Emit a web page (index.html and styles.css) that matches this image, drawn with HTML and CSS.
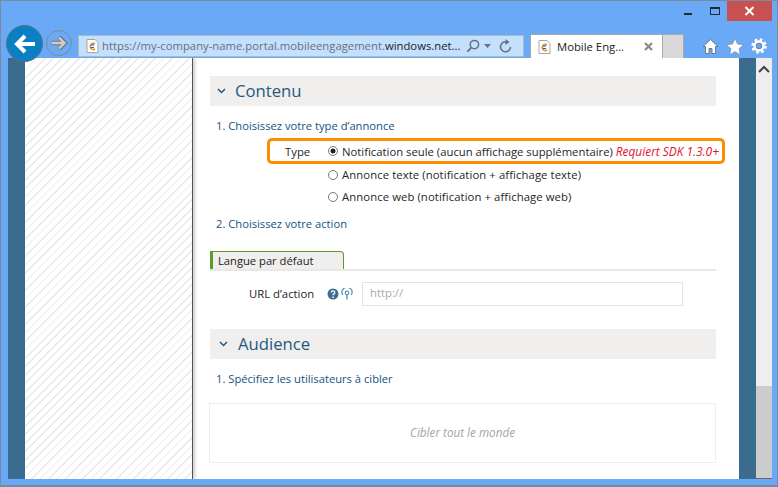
FILE: index.html
```html
<!DOCTYPE html>
<html lang="fr">
<head>
    <meta charset="UTF-8">
    <title>Mobile Engagement</title>
    <link rel="stylesheet" href="styles.css">
</head>
<body>
    <div class="window">
        <div class="titlebar">
            <span class="win-min"></span>
            <span class="win-max"></span>
            <span class="win-close">
                <svg width="11" height="10" viewBox="0 0 11 10"><path d="M1.5 1l8 8M9.5 1l-8 8" stroke="#fff" stroke-width="2"/></svg>
            </span>
        </div>
        <div class="toolbar">
            <span class="back">
                <svg width="26" height="26" viewBox="0 0 26 26"><path d="M23 13H6M13 5l-8 8 8 8" fill="none" stroke="#fff" stroke-width="4"/></svg>
            </span>
            <span class="forward">
                <svg width="18" height="16" viewBox="0 0 18 16"><path d="M1 8h13M9 2l6 6-6 6" fill="none" stroke="#77777a" stroke-width="4.400"/><path d="M1.500 8h12.500M9 2.500l5.500 5.500L9 13.500" fill="none" stroke="#cfcfca" stroke-width="2.400"/></svg>
            </span>
            <div class="address">
                <svg class="favicon" width="13" height="14" viewBox="0 0 13 14"><path d="M1 .5h8l3 3v10H1z" fill="#fff" stroke="#a5a5a5"/><path d="M9 5a3 3 0 1 0 0 5" fill="none" stroke="#e8912c" stroke-width="1.6"/><path d="M5 6h3M5 8.500h3" stroke="#1d5fa8"/></svg>
                <span class="url">https://my-company-name.portal.mobileengagement.<b>windows.net...</b></span>
                <svg class="addr-icon" width="14" height="14" viewBox="0 0 15 15"><circle cx="9" cy="6" r="4.500" fill="none" stroke="#6b7078" stroke-width="1.600"/><path d="M5.500 9.500L1.500 13.500" stroke="#6b7078" stroke-width="2"/></svg>
                <svg class="addr-caret" width="7" height="4" viewBox="0 0 7 4"><path d="M0 0h7L3.500 4z" fill="#6b7078"/></svg>
                <svg class="addr-icon" width="13" height="14" viewBox="0 0 13 14"><path d="M8.500 3.200A5 5 0 1 0 11.500 8" fill="none" stroke="#6b7078" stroke-width="1.600"/><path d="M6.500 0v6l4-3z" fill="#6b7078"/></svg>
            </div>
            <div class="tab">
                <svg class="favicon" width="13" height="14" viewBox="0 0 13 14"><path d="M1 .5h8l3 3v10H1z" fill="#fff" stroke="#a5a5a5"/><path d="M9 5a3 3 0 1 0 0 5" fill="none" stroke="#e8912c" stroke-width="1.6"/><path d="M5 6h3M5 8.500h3" stroke="#1d5fa8"/></svg>
                <span class="tab-title">Mobile Eng...</span>
                <svg width="9" height="9" viewBox="0 0 9 9"><path d="M1 1l7 7M8 1L1 8" stroke="#8a8a8a" stroke-width="2.200"/></svg>
            </div>
            <div class="newtab"></div>
            <div class="tools">
                <svg width="17" height="17" viewBox="0 0 17 17"><path d="M8.500 1.500L1 8.500h2.500V15.500h3.500v-5h3v5h3.500V8.500H16z" fill="#fff" stroke="#6f7884"/></svg>
                <svg width="18" height="17" viewBox="0 0 18 17"><path d="M9 .5l2.500 5.600 6 .6-4.500 4 1.300 6L9 13.600 3.700 16.700l1.300-6-4.500-4 6-.6z" fill="#fff" stroke="#7d8794" stroke-width=".6"/></svg>
                <svg width="16" height="16" viewBox="0 0 16 16"><circle cx="8" cy="8" r="4.500" fill="none" stroke="#fff" stroke-width="2.400"/><circle cx="8" cy="8" r="6" fill="none" stroke="#fff" stroke-width="3.500" stroke-dasharray="2.400 2.300"/><circle cx="8" cy="8" r="2.600" fill="none" stroke="#6f7884" stroke-width=".8"/></svg>
            </div>
        </div>
        <div class="viewport">
            <div class="strip"></div>
            <div class="hatch"></div>
            <div class="main">
                <div class="section-head">
                    <svg width="9" height="6" viewBox="0 0 9 6"><path d="M1 1l3.500 3.500L8 1" fill="none" stroke="#245a80" stroke-width="1.500"/></svg>
                    <h2>Contenu</h2>
                </div>
                <p class="step step-first">1. Choisissez votre type d’annonce</p>
                <div class="type-row">
                    <span class="type-label">Type</span>
                    <span class="radio radio-on"></span>
                    <span>Notification seule (aucun affichage supplémentaire) <em>Requiert SDK 1.3.0+</em></span>
                </div>
                <div class="option"><span class="radio"></span><span class="option-text">Annonce texte (notification + affichage texte)</span></div>
                <div class="option option-last"><span class="radio"></span><span class="option-text">Annonce web (notification + affichage web)</span></div>
                <p class="step">2. Choisissez votre action</p>
                <div class="lang-tabs"><span class="lang-tab">Langue par défaut</span></div>
                <div class="url-row">
                    <span class="url-label">URL d’action</span>
                    <svg class="help" width="12" height="12" viewBox="0 0 12 12"><circle cx="6" cy="6" r="5.500" fill="#3a6d96"/><path d="M4.200 4.500a1.800 1.600 0 1 1 2.700 1.400c-.6.400-.9.600-.9 1.300" fill="none" stroke="#fff" stroke-width="1.300"/><path d="M5.300 8.500h1.400v1.400H5.300z" fill="#fff"/></svg>
                    <svg class="signal" width="12" height="12" viewBox="0 0 12 12"><path d="M1.800 7A5 5 0 1 1 10.200 7" fill="none" stroke="#5b97b8" stroke-width="1.300"/><circle cx="6" cy="5" r="1.800" fill="none" stroke="#5b97b8" stroke-width="1.200"/><path d="M6 7v4.500" stroke="#5b97b8" stroke-width="1.400"/></svg>
                    <span class="url-input">http://</span>
                </div>
                <div class="section-head section-audience">
                    <svg width="9" height="6" viewBox="0 0 9 6"><path d="M1 1l3.500 3.500L8 1" fill="none" stroke="#245a80" stroke-width="1.500"/></svg>
                    <h2>Audience</h2>
                </div>
                <p class="step step-target">1. Spécifiez les utilisateurs à cibler</p>
                <div class="target-box">Cibler tout le monde</div>
            </div>
            <div class="strip"></div>
            <div class="scrollbar">
                <div class="scroll-thumb">
                    <svg width="12" height="8" viewBox="0 0 12 8"><path d="M1 7l5-5 5 5" fill="none" stroke="#444" stroke-width="2"/></svg>
                </div>
            </div>
        </div>
    </div>
</body>
</html>
```
FILE: styles.css
```css
* { box-sizing: border-box; }
html, body { margin: 0; padding: 0; }
body { width: 778px; height: 487px; overflow: hidden; font-family: "Open Sans", "Noto Sans", sans-serif; font-size: 11.3px; color: #262626; }

.window { width: 778px; height: 487px; background: #69a9f5; border: 1px solid #7a8a9e; border-bottom-width: 2px; display: flex; flex-direction: column; }

.titlebar { height: 20px; display: flex; justify-content: flex-end; align-items: flex-start; padding-right: 5px; }
.win-min { width: 8px; height: 2px; background: #1d2a38; margin: 12px 18px 0 0; }
.win-max { width: 10px; height: 8px; border: 1px solid #1d2a38; border-top-width: 2px; margin: 6px 7px 0 0; }
.win-close { width: 45px; height: 20px; background: #c75050; display: flex; align-items: center; justify-content: center; }

.toolbar { height: 37px; display: flex; align-items: flex-end; padding-left: 5px; }
.back { width: 37px; height: 37px; margin-bottom: -4px; border-radius: 50%; background: #0a80c4; border: 1px solid #5d6f80; display: flex; align-items: center; justify-content: center; position: relative; }
.forward { width: 26px; height: 26px; margin: 0 6px 2px 3px; border-radius: 50%; border: 1px solid #7d8b99; display: flex; align-items: center; justify-content: center; }
.address { width: 446px; height: 22px; margin-bottom: 1px; background: #c4e0ff; border: 1px solid #a9b9cc; display: flex; align-items: center; padding-left: 7px; white-space: nowrap; }
.url { width: 359px; flex: none; margin: 0 5px 2px 3px; color: #6b6f75; font-size: 11.3px; }
.url b { font-weight: normal; color: #222; }
.addr-icon { flex: none; }
.addr-caret { flex: none; margin: 0 8px 0 4px; }
.favicon { flex: none; }
.tab { width: 133px; height: 24px; margin-left: 6px; background: #fff; border: 1px solid #a8a8a8; border-bottom: 0; display: flex; align-items: center; padding: 0 9px 0 7px; }
.tab-title { flex: 1; margin-left: 6px; color: #222; font-size: 11.3px; white-space: nowrap; }
.newtab { width: 21px; height: 24px; background: #d9d9d9; border: 1px solid #a8a8a8; border-left: 0; border-bottom: 0; }
.tools { height: 24px; display: flex; align-items: center; gap: 7px; padding-left: 18px; }

.viewport { height: 421px; margin: 0 5px 0 7px; background: #fff; display: flex; overflow: hidden; }
.strip { width: 17px; flex: none; background: #3b6c8f; }
.hatch { width: 168px; flex: none; background: repeating-linear-gradient(-45deg, #fff 0, #fff 4.8px, #e7e9ee 4.8px, #e7e9ee 6px); border-right: 1px solid #555; box-shadow: 2px 0 3px rgba(0, 0, 0, .2); }
.main { width: 546px; flex: none; padding: 18px 23px 0 17px; }

.section-head { height: 30px; background: #f0efee; display: flex; align-items: center; padding-left: 7px; }
.section-head h2 { margin: 0 0 2px 9px; font-size: 16.7px; font-weight: normal; color: #245a80; }
.section-audience { margin-top: 23px; }
.section-audience svg { margin-left: 2px; }
.section-audience h2 { margin-left: 10px; }

.step { margin: 0; padding-left: 6px; color: #14537f; font-size: 11.2px; line-height: 17px; height: 17px; }
.step-first { margin-top: 11px; }
.step-target { margin-top: 11px; }

.type-row { width: 458px; height: 26px; margin: 4px 0 0 57px; border: 3px solid #ff8c00; border-radius: 5px; display: flex; align-items: center; padding-left: 15px; white-space: nowrap; }
.type-label { width: 43px; flex: none; }
.type-row em { color: #e3122a; font-size: 11.9px; }
.radio { width: 10px; height: 10px; flex: none; margin-right: 4px; border: 1px solid #777; border-radius: 50%; background: #fff; }
.radio-on { background: radial-gradient(circle, #222 0, #222 2.200px, #fff 2.800px); }
.option { height: 22px; margin-left: 118px; display: flex; align-items: center; letter-spacing: .09px; }
.option-text { margin-bottom: 2px; }
.option-last { margin-bottom: 7px; }

.lang-tabs { margin-top: 19px; border-bottom: 2px solid #e8e8e8; height: 20px; }
.lang-tab { display: block; width: 134px; height: 18px; padding-left: 5px; line-height: 18px; background: #f0efee; border: 1px solid #5d9b2d; border-left-width: 3px; border-bottom: 0; border-radius: 0 4px 0 0; color: #222; font-size: 11.2px; }

.url-row { margin-top: 11px; height: 24px; display: flex; align-items: center; padding-left: 39px; }
.url-label { width: 78px; flex: none; margin-bottom: 2px; }
.signal { margin: 0 9px 0 2px; }
.url-input { width: 321px; height: 24px; border: 1px solid #e4e4e4; padding-left: 7px; line-height: 20px; color: #aaa; }

.target-box { width: 507px; height: 60px; margin: 16px 0 0 -1px; padding-bottom: 2px; border: 1px solid #eee; display: flex; align-items: center; justify-content: center; color: #a5a5a5; font-size: 11.7px; font-style: italic; }

.scrollbar { width: 16px; flex: none; background: #ccc; border-bottom: 1px solid #667; }
.scroll-thumb { height: 328px; background: #eee; display: flex; justify-content: center; padding-top: 7px; }
```
